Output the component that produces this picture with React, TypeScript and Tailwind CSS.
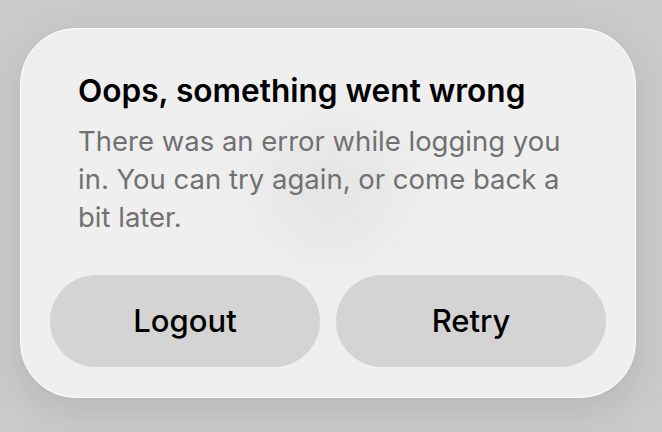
const ErrorDialog = () => {
  const handleLogout = () => {};
  const handleRetry = () => {};

  return (
    <div className="relative w-[616px] h-[370px] rounded-[56px] bg-[#efefef] border border-white shadow-[0_12px_40px_rgba(0,0,0,0.10)] flex flex-col overflow-hidden">
      {/* faint blurred spinner ghost behind the text */}
      <div className="absolute left-[242px] top-[92px] w-[136px] h-[136px] rounded-full bg-[#e6e6e6] blur-xl" />
      <div className="relative flex flex-col px-[57px] pt-[43px]">
        <h2 className="text-[31.6px] leading-[38px] font-semibold text-black">
          Oops, something went wrong
        </h2>
        <p className="mt-[12px] text-[27.5px] leading-[38px] text-[#717171]">
          There was an error while logging you in. You can try again, or come back a bit later.
        </p>
      </div>
      <div className="relative mt-auto flex gap-[16px] px-[29px] pb-[30px]">
        <button
          type="button"
          onClick={handleLogout}
          className="flex-1 h-[92px] rounded-full bg-[#d4d4d4] text-[31px] font-medium text-black"
        >
          Logout
        </button>
        <button
          type="button"
          onClick={handleRetry}
          className="flex-1 h-[92px] rounded-full bg-[#d4d4d4] text-[31px] font-medium text-black"
        >
          Retry
        </button>
      </div>
    </div>
  );
};

export default function App() {
  return (
    <div
      className="w-[662px] h-[432px] bg-[#cacaca] pt-[28px] pl-[20px]"
      style={{ fontFamily: 'Inter, "Noto Sans", sans-serif' }}
    >
      <ErrorDialog />
    </div>
  );
}
